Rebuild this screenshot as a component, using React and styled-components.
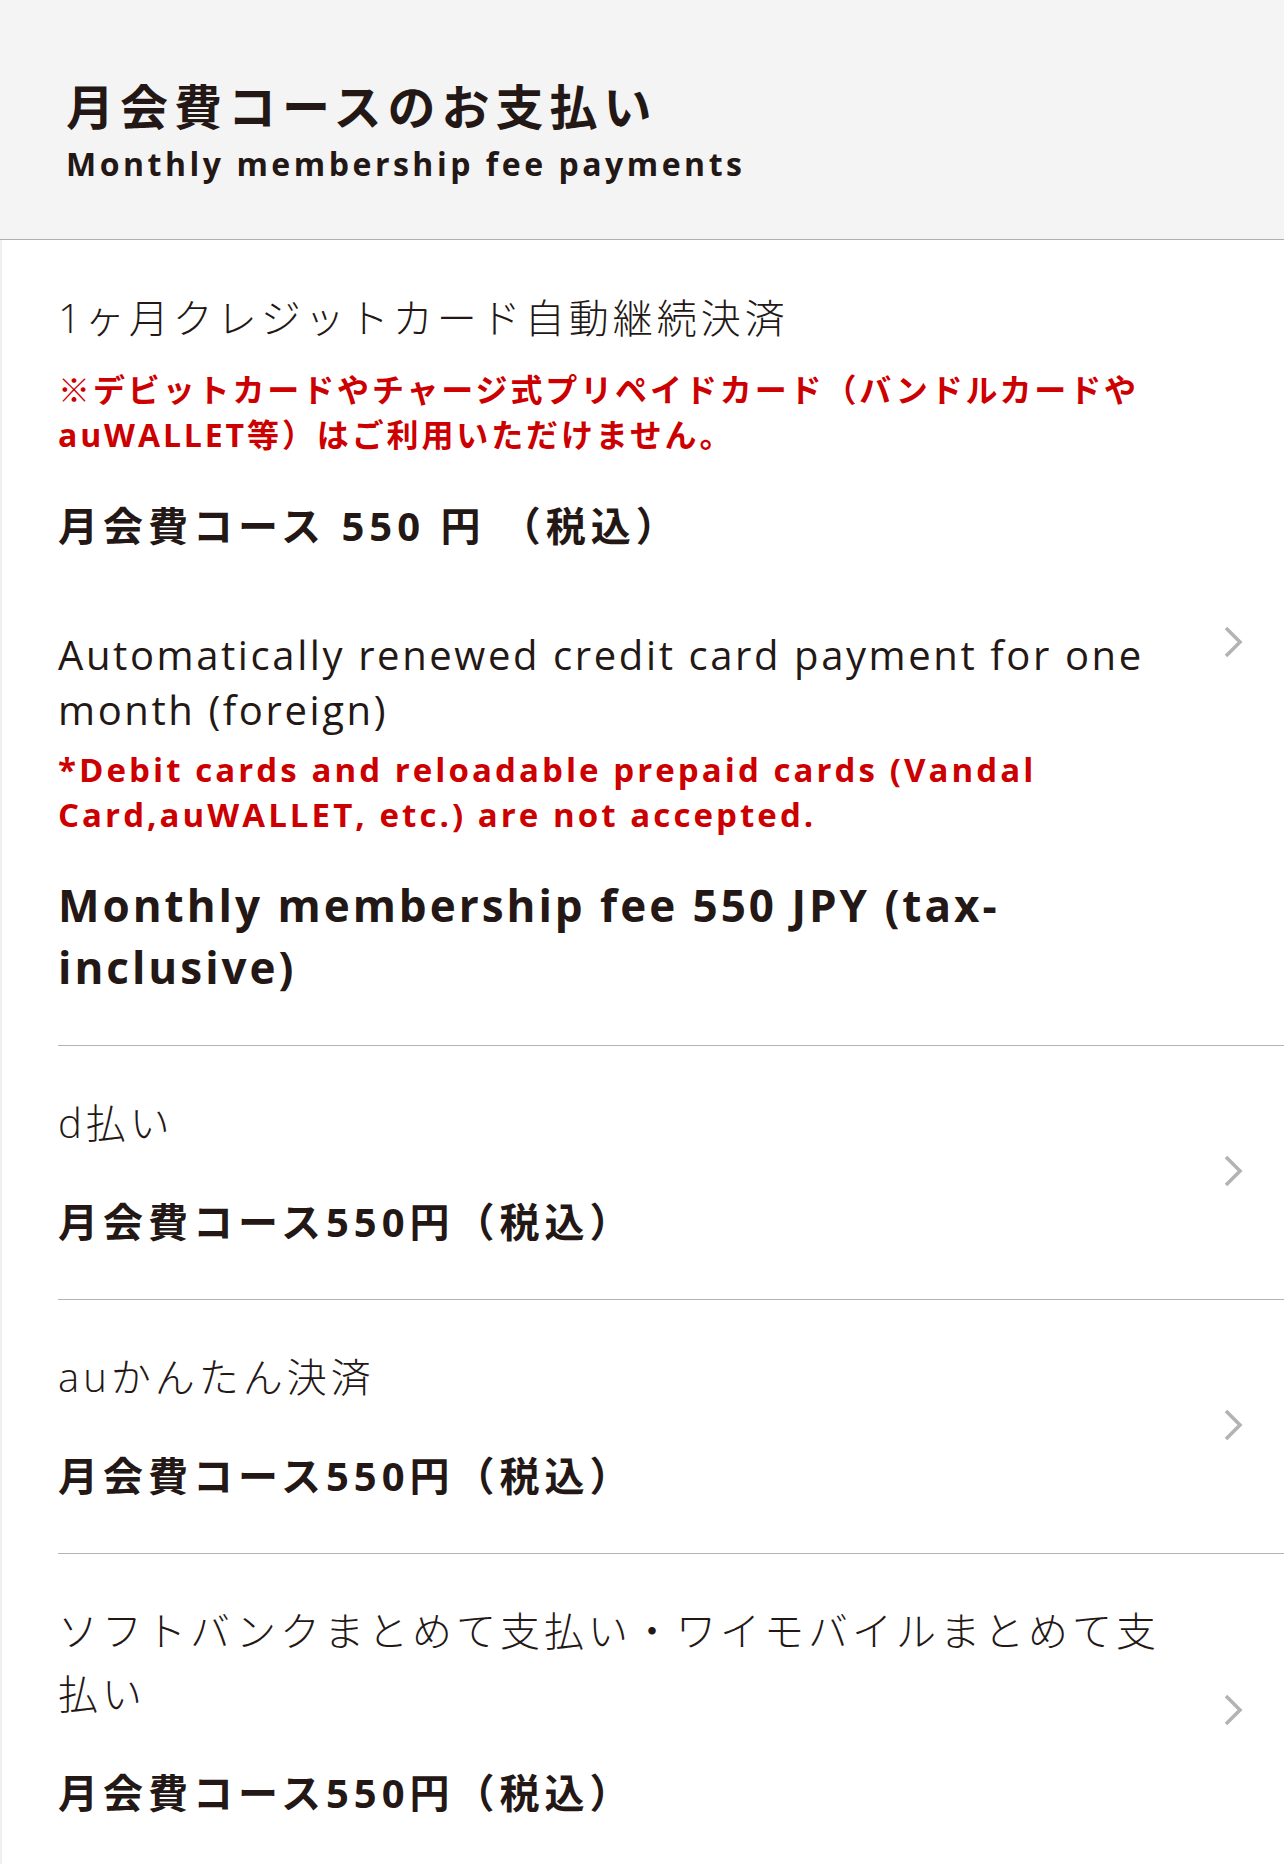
import React from "react";
import styled, { createGlobalStyle } from "styled-components";

const GlobalStyle = createGlobalStyle`
  html, body { margin: 0; padding: 0; background: #ffffff; }
  body {
    font-family: "Open Sans", "Noto Sans CJK JP", sans-serif;
    color: #231815;
    -webkit-font-smoothing: antialiased;
  }
  * { box-sizing: border-box; }
`;

const Page = styled.div`
  width: 1284px;
  min-height: 1864px;
  display: flex;
  flex-direction: column;
  background: #fff;
`;

const Header = styled.header`
  background: #f4f4f4;
  border-bottom: 1px solid #b0b0b0;
  padding: 74px 66px 55px;
`;

const HeaderTitle = styled.h1`
  margin: 0;
  font-family: "Noto Sans CJK JP", sans-serif;
  font-size: 48px;
  line-height: 60px;
  font-weight: 700;
  letter-spacing: 0.125em;
`;

const HeaderSub = styled.p`
  margin: 10px 0 0;
  font-size: 32px;
  line-height: 40px;
  font-weight: 700;
  letter-spacing: 0.11em;
`;

const List = styled.ul`
  flex: 1;
  list-style: none;
  margin: 0;
  padding: 0;
  border-left: 2px solid #f0f0f0;
`;

const Item = styled.li`
  display: flex;
  align-items: center;
  margin-left: 56px;
  padding: ${(p) => (p.$first ? "46px 0 47px" : "45px 0 49px")};
  border-bottom: ${(p) => (p.$last ? "none" : "1px solid #b4b4b4")};
`;

const Body = styled.div`
  flex: 1;
  min-width: 0;
`;

const Block = styled.div`
  & + & { margin-top: 73px; }
`;

const Name = styled.div`
  font-size: 40px;
  line-height: ${(p) => (p.$en ? "55px" : "63px")};
  font-weight: ${(p) => (p.$en ? 400 : 300)};
  letter-spacing: ${(p) => (p.$en ? "0.065em" : "0.1em")};
`;

const Note = styled.div`
  margin-top: ${(p) => (p.$en ? "10px" : "18px")};
  color: #cc0000;
  font-size: ${(p) => (p.$en ? "33px" : "32px")};
  line-height: 45px;
  font-weight: 700;
  letter-spacing: ${(p) => (p.$en ? "0.093em" : "0.09em")};
`;

const Price = styled.div`
  margin-top: ${(p) => (p.$en ? "37px" : p.$tight ? "41px" : "40px")};
  font-size: ${(p) => (p.$en ? "44px" : "40px")};
  line-height: ${(p) => (p.$en ? "62px" : "56px")};
  font-weight: 700;
  letter-spacing: ${(p) => (p.$en ? "0.068em" : "0.125em")};
`;

const ChevronBox = styled.div`
  flex: 0 0 106px;
  display: flex;
  justify-content: flex-end;
  padding-right: 39px;
`;

const Chevron = () => (
  <svg width="24" height="34" viewBox="0 0 24 34" aria-hidden="true">
    <polyline
      points="5,3 19,17 5,31"
      fill="none"
      stroke="#b3b3b3"
      strokeWidth="3.6"
      strokeLinecap="butt"
      strokeLinejoin="miter"
    />
  </svg>
);

const simpleRows = [
  { name: "d払い", price: "月会費コース550円（税込）" },
  { name: "auかんたん決済", price: "月会費コース550円（税込）" },
  {
    name: "ソフトバンクまとめて支払い・ワイモバイルまとめて支払い",
    price: "月会費コース550円（税込）",
  },
];

export default function App() {
  return (
    <Page>
      <GlobalStyle />
      <Header>
        <HeaderTitle>月会費コースのお支払い</HeaderTitle>
        <HeaderSub>Monthly membership fee payments</HeaderSub>
      </Header>
      <List>
        <Item $first>
          <Body>
            <Block>
              <Name>1ヶ月クレジットカード自動継続決済</Name>
              <Note>
                ※デビットカードやチャージ式プリペイドカード（バンドルカードやauWALLET等）はご利用いただけません。
              </Note>
              <Price $tight>月会費コース 550 円 （税込）</Price>
            </Block>
            <Block>
              <Name $en>
                Automatically renewed credit card payment for one month (foreign)
              </Name>
              <Note $en>
                *Debit cards and reloadable prepaid cards (Vandal Card,auWALLET, etc.) are not accepted.
              </Note>
              <Price $en>Monthly membership fee 550 JPY (tax-inclusive)</Price>
            </Block>
          </Body>
          <ChevronBox>
            <Chevron />
          </ChevronBox>
        </Item>
        {simpleRows.map((r, i) => (
          <Item key={r.name} $last={i === simpleRows.length - 1}>
            <Body>
              <Name>{r.name}</Name>
              <Price>{r.price}</Price>
            </Body>
            <ChevronBox>
              <Chevron />
            </ChevronBox>
          </Item>
        ))}
      </List>
    </Page>
  );
}
